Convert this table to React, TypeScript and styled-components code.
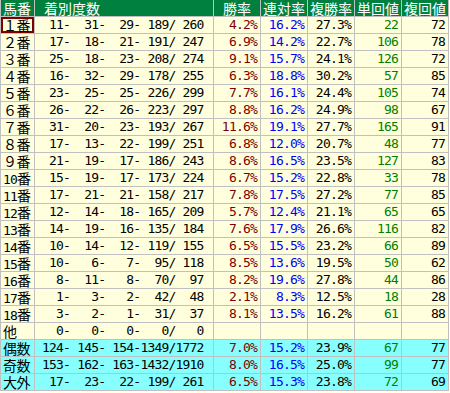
import styled, { createGlobalStyle } from "styled-components";

const GlobalStyle = createGlobalStyle`
  html, body {
    margin: 0;
    padding: 0;
    background: #ffffee;
  }
`;

type Tone = "win" | "place" | "show" | "tan" | "fuku";

const toneColor: Record<Tone, string> = {
  win: "#800000",
  place: "#0000ff",
  show: "#000000",
  tan: "#008000",
  fuku: "#000000",
};

const Table = styled.table`
  border-collapse: collapse;
  table-layout: fixed;
  width: 449px;
  font-family: "DejaVu Sans Mono", "Noto Sans CJK JP", monospace;
`;

const HeadCell = styled.th<{ $indent?: number }>`
  background: #00803f;
  color: #ffffff;
  border: 1px solid #c0c0c0;
  border-top: none;
  padding: 0 0 0 ${(p) => p.$indent ?? 2}px;
  text-align: left;
  font-family: "Noto Sans CJK JP", sans-serif;
  font-weight: normal;
  font-size: 14px;
`;

const Row = styled.tr<{ $cyan?: boolean }>`
  background: ${(p) => (p.$cyan ? "#88ffff" : "#ffffdd")};
`;

const Cell = styled.td`
  border: 1px solid #c0c0c0;
  padding: 0;
`;

// fixed-height box so mixed fonts never stretch a row
const Inner = styled.div<{ $align?: "left" | "right"; $padRight?: number }>`
  height: 16px;
  line-height: 16px;
  white-space: pre;
  text-align: ${(p) => p.$align ?? "right"};
  padding-right: ${(p) => p.$padRight ?? 3}px;
`;

const NameCell = styled(Cell)<{ $selected?: boolean }>`
  font-family: "Noto Sans CJK JP", sans-serif;
  font-size: 14px;
  padding-left: 2px;
  letter-spacing: -0.5px;
  box-shadow: ${(p) => (p.$selected ? "inset 0 0 0 2px #800000" : "none")};
`;

const Digits = styled.span`
  font-family: "DejaVu Sans Mono", monospace;
  font-size: 13px;
  letter-spacing: -0.8px;
`;

const CountCell = styled(Cell)`
  font-size: 13px;
  letter-spacing: -0.8px;
`;

const ValueCell = styled(Cell)<{ $tone: Tone }>`
  font-size: 13px;
  letter-spacing: -0.8px;
  color: ${(p) => toneColor[p.$tone]};
`;

type Stat = {
  name: string;
  counts: number[];
  rates?: [number, number, number];
  returns?: [number, number];
  cyan?: boolean;
};

const raw: [string, number[], number[] | null, boolean?][] = [
  ["１番", [11, 31, 29, 189, 260], [4.2, 16.2, 27.3, 22, 72]],
  ["２番", [17, 18, 21, 191, 247], [6.9, 14.2, 22.7, 106, 78]],
  ["３番", [25, 18, 23, 208, 274], [9.1, 15.7, 24.1, 126, 72]],
  ["４番", [16, 32, 29, 178, 255], [6.3, 18.8, 30.2, 57, 85]],
  ["５番", [23, 25, 25, 226, 299], [7.7, 16.1, 24.4, 105, 74]],
  ["６番", [26, 22, 26, 223, 297], [8.8, 16.2, 24.9, 98, 67]],
  ["７番", [31, 20, 23, 193, 267], [11.6, 19.1, 27.7, 165, 91]],
  ["８番", [17, 13, 22, 199, 251], [6.8, 12.0, 20.7, 48, 77]],
  ["９番", [21, 19, 17, 186, 243], [8.6, 16.5, 23.5, 127, 83]],
  ["10番", [15, 19, 17, 173, 224], [6.7, 15.2, 22.8, 33, 78]],
  ["11番", [17, 21, 21, 158, 217], [7.8, 17.5, 27.2, 77, 85]],
  ["12番", [12, 14, 18, 165, 209], [5.7, 12.4, 21.1, 65, 65]],
  ["13番", [14, 19, 16, 135, 184], [7.6, 17.9, 26.6, 116, 82]],
  ["14番", [10, 14, 12, 119, 155], [6.5, 15.5, 23.2, 66, 89]],
  ["15番", [10, 6, 7, 95, 118], [8.5, 13.6, 19.5, 50, 62]],
  ["16番", [8, 11, 8, 70, 97], [8.2, 19.6, 27.8, 44, 86]],
  ["17番", [1, 3, 2, 42, 48], [2.1, 8.3, 12.5, 18, 28]],
  ["18番", [3, 2, 1, 31, 37], [8.1, 13.5, 16.2, 61, 88]],
  ["他", [0, 0, 0, 0, 0], null],
  ["偶数", [124, 145, 154, 1349, 1772], [7.0, 15.2, 23.9, 67, 77], true],
  ["奇数", [153, 162, 163, 1432, 1910], [8.0, 16.5, 25.0, 99, 77], true],
  ["大外", [17, 23, 22, 199, 261], [6.5, 15.3, 23.8, 72, 69], true],
];

const stats: Stat[] = raw.map(([name, counts, v, cyan]) => ({
  name,
  counts,
  rates: v ? [v[0], v[1], v[2]] : undefined,
  returns: v ? [v[3], v[4]] : undefined,
  cyan,
}));

const pad = (n: number) => String(n).padStart(4, " ");

const formatCounts = (c: number[]) =>
  `${pad(c[0])}-${pad(c[1])}-${pad(c[2])}-${pad(c[3])}/${pad(c[4])}`;

// split half-width digits from the kanji so each gets its own font
const renderName = (name: string) => {
  const m = name.match(/^(\d+)(.*)$/);
  if (!m) return name;
  return (
    <>
      <Digits>{m[1]}</Digits>
      {m[2]}
    </>
  );
};

export default function App() {
  return (
    <>
      <GlobalStyle />
      <Table>
        <colgroup>
          <col style={{ width: 34 }} />
          <col style={{ width: 179 }} />
          <col style={{ width: 47 }} />
          <col style={{ width: 47 }} />
          <col style={{ width: 47 }} />
          <col style={{ width: 47 }} />
          <col style={{ width: 47 }} />
        </colgroup>
        <thead>
          <tr>
            <HeadCell><Inner $align="left" $padRight={0}>馬番</Inner></HeadCell>
            <HeadCell $indent={9}><Inner $align="left" $padRight={0}>着別度数</Inner></HeadCell>
            <HeadCell $indent={9}><Inner $align="left" $padRight={0}>勝率</Inner></HeadCell>
            <HeadCell><Inner $align="left" $padRight={0}>連対率</Inner></HeadCell>
            <HeadCell><Inner $align="left" $padRight={0}>複勝率</Inner></HeadCell>
            <HeadCell><Inner $align="left" $padRight={0}>単回値</Inner></HeadCell>
            <HeadCell><Inner $align="left" $padRight={0}>複回値</Inner></HeadCell>
          </tr>
        </thead>
        <tbody>
          {stats.map((s, i) => (
            <Row key={s.name} $cyan={s.cyan}>
              <NameCell $selected={i === 0}>
                <Inner $align="left" $padRight={0}>{renderName(s.name)}</Inner>
              </NameCell>
              <CountCell>
                <Inner $padRight={10}>{formatCounts(s.counts)}</Inner>
              </CountCell>
              <ValueCell $tone="win">
                <Inner>{s.rates ? `${s.rates[0].toFixed(1)}%` : ""}</Inner>
              </ValueCell>
              <ValueCell $tone="place">
                <Inner>{s.rates ? `${s.rates[1].toFixed(1)}%` : ""}</Inner>
              </ValueCell>
              <ValueCell $tone="show">
                <Inner>{s.rates ? `${s.rates[2].toFixed(1)}%` : ""}</Inner>
              </ValueCell>
              <ValueCell $tone="tan">
                <Inner>{s.returns ? s.returns[0] : ""}</Inner>
              </ValueCell>
              <ValueCell $tone="fuku">
                <Inner>{s.returns ? s.returns[1] : ""}</Inner>
              </ValueCell>
            </Row>
          ))}
        </tbody>
      </Table>
    </>
  );
}
